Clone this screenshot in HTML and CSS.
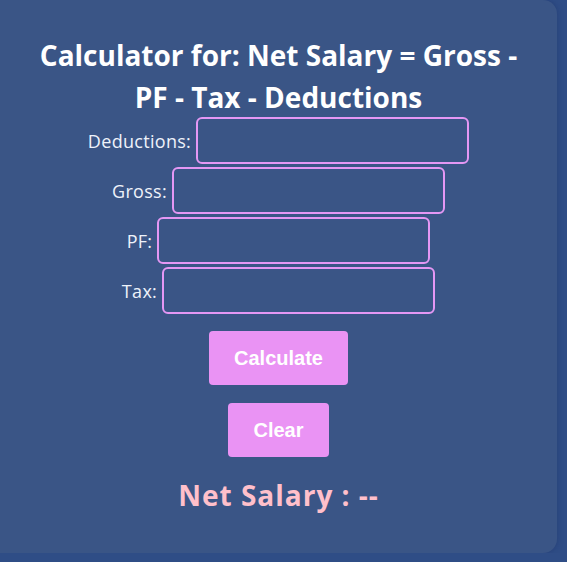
FILE: index.html
```html
<!DOCTYPE html>
<html lang="en">
<head>
    <meta charset="UTF-8">
    <meta name="viewport" content="width=device-width, initial-scale=1.0">
    <title>Net Salary Calculator</title>
    <link rel="stylesheet" href="styles.css">
</head>
<body>
    <div class="calculator">
        <h1 class="calc-title">Calculator for: Net Salary = Gross - PF - Tax - Deductions</h1>

        <form class="calc-form" id="calcForm" onsubmit="return false;">
            <div class="field-row">
                <label for="deductions">Deductions:</label>
                <input type="number" id="deductions" class="field-input">
            </div>
            <div class="field-row">
                <label for="gross">Gross:</label>
                <input type="number" id="gross" class="field-input">
            </div>
            <div class="field-row">
                <label for="pf">PF:</label>
                <input type="number" id="pf" class="field-input">
            </div>
            <div class="field-row">
                <label for="tax">Tax:</label>
                <input type="number" id="tax" class="field-input">
            </div>

            <div class="buttons">
                <button class="calc-button" onclick="calculate()">Calculate</button>
                <button class="calc-button" onclick="clearForm()">Clear</button>
            </div>
        </form>

        <p class="result" id="result">Net Salary : --</p>
    </div>

    <script>
        // Lee un campo numérico, vacío cuenta como 0
        function readValue(id) {
            const value = parseFloat(document.getElementById(id).value);
            return isNaN(value) ? 0 : value;
        }

        function calculate() {
            const net = readValue('gross') - readValue('pf') - readValue('tax') - readValue('deductions');
            document.getElementById('result').textContent = `Net Salary : ${net.toFixed(2)}`;
        }

        function clearForm() {
            document.getElementById('calcForm').reset();
            document.getElementById('result').textContent = 'Net Salary : --';
        }
    </script>
</body>
</html>
```

FILE: styles.css
```css
* {
    box-sizing: border-box;
    margin: 0;
    padding: 0;
}

body {
    background-color: #2f4d86;
    font-family: 'Open Sans', 'Liberation Sans', sans-serif;
}

.calculator {
    width: 557px;
    height: 553px;
    background-color: #3a5586;
    border-radius: 0 14px 14px 0;
    box-shadow: 0 0 6px rgba(20, 40, 90, 0.35);
    padding-top: 34px;
    text-align: center;
}

.calc-title {
    color: #ffffff;
    font-size: 28px;
    font-weight: 700;
    line-height: 42px;
    padding: 0 30px;
}

.calc-form {
    margin-top: -1px;
}

.field-row {
    display: flex;
    justify-content: center;
    align-items: center;
    gap: 5px;
    margin-bottom: 3px;
}

.field-row label {
    color: #eef2fa;
    font-size: 18px;
    letter-spacing: 0.3px;
}

.field-input {
    width: 273px;
    height: 47px;
    background: transparent;
    border: 2px solid #e497f4;
    border-radius: 6px;
    color: white;
    font-size: 16px;
    padding: 0 8px;
}

.buttons {
    display: flex;
    flex-direction: column;
    align-items: center;
    gap: 18px;
    margin-top: 17px;
}

.calc-button {
    background: #ea93f4;
    color: white;
    border: none;
    border-radius: 4px;
    font-family: 'Liberation Sans', Arial, sans-serif;
    font-weight: bold;
    font-size: 20px;
    line-height: 24px;
    padding: 15px 25px;
    cursor: pointer;
}

.result {
    color: #ffc0cb;
    font-size: 28px;
    font-weight: 700;
    letter-spacing: 1px;
    margin-top: 19px;
}
```
